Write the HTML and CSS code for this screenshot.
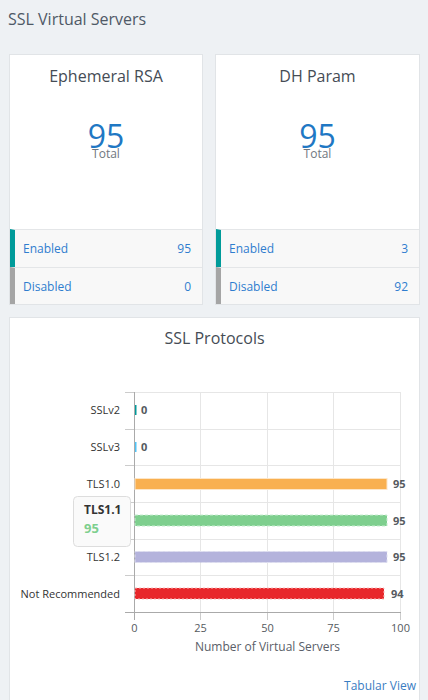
FILE: index.html
```html
<!DOCTYPE html>
<html>
<head>
<meta charset="utf-8">
<link rel="stylesheet" href="styles.css">
</head>
<body>
<div class="page">
  <h1 class="page-title">SSL Virtual Servers</h1>
  <div class="cards">
    <div class="card stat-card">
      <div class="card-title">Ephemeral RSA</div>
      <div class="total">
        <div class="total-num">95</div>
        <div class="total-label">Total</div>
      </div>
      <div class="rows">
        <div class="row row-enabled"><span>Enabled</span><span>95</span></div>
        <div class="row row-disabled"><span>Disabled</span><span>0</span></div>
      </div>
    </div>
    <div class="card stat-card">
      <div class="card-title">DH Param</div>
      <div class="total">
        <div class="total-num">95</div>
        <div class="total-label">Total</div>
      </div>
      <div class="rows">
        <div class="row row-enabled"><span>Enabled</span><span>3</span></div>
        <div class="row row-disabled"><span>Disabled</span><span>92</span></div>
      </div>
    </div>
  </div>
  <div class="card chart-card">
    <div class="card-title">SSL Protocols</div>
    <svg class="chart" width="409" height="310" viewBox="0 0 409 310">
      <g class="grid" stroke="#e6e6e6" stroke-width="1">
        <line x1="190.5" y1="42" x2="190.5" y2="262"/>
        <line x1="257.5" y1="42" x2="257.5" y2="262"/>
        <line x1="323.5" y1="42" x2="323.5" y2="262"/>
        <line x1="390.5" y1="42" x2="390.5" y2="262"/>
        <line x1="124" y1="42.5" x2="390" y2="42.5"/>
        <line x1="124" y1="79.5" x2="390" y2="79.5"/>
        <line x1="124" y1="115.5" x2="390" y2="115.5"/>
        <line x1="124" y1="152.5" x2="390" y2="152.5"/>
        <line x1="124" y1="189.5" x2="390" y2="189.5"/>
        <line x1="124" y1="225.5" x2="390" y2="225.5"/>
      </g>
      <g stroke="#cccccc" stroke-width="1">
        <line x1="115" y1="42.5" x2="124" y2="42.5"/>
        <line x1="115" y1="79.5" x2="124" y2="79.5"/>
        <line x1="115" y1="115.5" x2="124" y2="115.5"/>
        <line x1="115" y1="152.5" x2="124" y2="152.5"/>
        <line x1="115" y1="189.5" x2="124" y2="189.5"/>
        <line x1="115" y1="225.5" x2="124" y2="225.5"/>
      </g>
      <g stroke="#cccccc" stroke-width="1">
        <line x1="190.5" y1="262" x2="190.5" y2="270"/>
        <line x1="257.5" y1="262" x2="257.5" y2="270"/>
        <line x1="323.5" y1="262" x2="323.5" y2="270"/>
        <line x1="390.5" y1="262" x2="390.5" y2="270"/>
      </g>
      <line x1="115" y1="262.5" x2="391" y2="262.5" stroke="#aaaaaa" stroke-width="1"/>
      <line x1="124.5" y1="42" x2="124.5" y2="270" stroke="#aaaaaa" stroke-width="1"/>

      <g class="bars">
        <rect x="125" y="55" width="1.5" height="10" fill="#00999a"/>
        <rect x="125" y="92" width="1.5" height="10" fill="#4fc3f7"/>
        <rect x="125" y="128.5" width="252" height="11" fill="#f9b050" stroke="#fde6c8" stroke-width="1"/>
        <rect x="125" y="165" width="252" height="11" fill="#7ecf8e" stroke="#c7ecd0" stroke-width="1" stroke-dasharray="3 2"/>
        <rect x="125" y="201.5" width="252" height="11" fill="#b4b3dc" stroke="#dedef0" stroke-width="1" stroke-dasharray="3 2"/>
        <rect x="125" y="238" width="249" height="11" fill="#e8272b" stroke="#f8bcbc" stroke-width="1" stroke-dasharray="2 2"/>
      </g>

      <g class="vals">
        <text x="131" y="64">0</text>
        <text x="131" y="101">0</text>
        <text x="383" y="138">95</text>
        <text x="383" y="174.5">95</text>
        <text x="383" y="211">95</text>
        <text x="381" y="248">94</text>
      </g>

      <g class="ylabels" text-anchor="end">
        <text x="110" y="64">SSLv2</text>
        <text x="110" y="101">SSLv3</text>
        <text x="110" y="138">TLS1.0</text>
        <text x="110" y="211">TLS1.2</text>
        <text x="110" y="248">Not Recommended</text>
      </g>

      <g class="xlabels" text-anchor="middle">
        <text x="124.5" y="282">0</text>
        <text x="190.5" y="282">25</text>
        <text x="257.5" y="282">50</text>
        <text x="323.5" y="282">75</text>
        <text x="390.5" y="282">100</text>
      </g>
      <text class="axis-title" x="257.5" y="301" text-anchor="middle">Number of Virtual Servers</text>

      <g class="tooltip">
        <rect x="63.5" y="146.5" width="57" height="50" rx="4" ry="4" fill="#fafafa" stroke="#dddddd" stroke-width="1"/>
        <text class="tt-name" x="74" y="164">TLS1.1</text>
        <text class="tt-val" x="74" y="183">95</text>
      </g>
    </svg>
    <div class="chart-footer"><a class="tabular-link">Tabular View</a></div>
  </div>
</div>
</body>
</html>
```

FILE: styles.css
```css
* {
  box-sizing: border-box;
}

html, body {
  margin: 0;
  padding: 0;
  background: #eef1f4;
  font-family: "Open Sans", "DejaVu Sans", sans-serif;
}

.page {
  padding: 0 8px 0 9px;
}

.page-title {
  margin: 0;
  padding: 7px 0 0 0;
  height: 54px;
  font-size: 16px;
  font-weight: 400;
  line-height: 24px;
  color: #4f5966;
  margin-left: -1px;
}

.cards {
  display: grid;
  grid-template-columns: 194px 205px;
  column-gap: 12px;
}

.card {
  background: #ffffff;
  border: 1px solid #e1e4e7;
}

.stat-card {
  height: 251px;
  display: flex;
  flex-direction: column;
}

.card-title {
  text-align: center;
  font-size: 16px;
  line-height: 22px;
  color: #454c55;
  padding-top: 10px;
}

.total {
  flex: 1;
  display: flex;
  flex-direction: column;
  align-items: center;
  padding-top: 33px;
}

.total-num {
  font-size: 32px;
  line-height: 32px;
  color: #1f78c4;
  font-weight: 400;
}

.total-label {
  font-size: 12px;
  line-height: 14px;
  color: #707780;
  margin-top: -5px;
}

.rows {
  display: flex;
  flex-direction: column;
}

.row {
  display: flex;
  justify-content: space-between;
  align-items: center;
  height: 38px;
  background: #f8f8f8;
  border-top: 1px solid #e4e6e8;
  padding: 0 11px 0 8px;
  font-size: 12px;
  color: #2f7dcf;
}

.row-enabled {
  border-left: 5px solid #009b9a;
}

.row-disabled {
  border-left: 5px solid #a5a5a5;
  height: 37px;
}

.chart-card {
  margin-top: 12px;
  height: 400px;
  display: flex;
  flex-direction: column;
}

.chart-card .card-title {
  padding-top: 9px;
}

.chart {
  display: block;
  margin-top: 1px;
  font-family: "Open Sans", "DejaVu Sans", sans-serif;
}

.chart .ylabels text {
  font-size: 11px;
  fill: #333333;
}

.chart .vals text {
  font-size: 11px;
  font-weight: 700;
  fill: #555a60;
}

.chart .xlabels text {
  font-size: 11px;
  fill: #555a60;
}

.chart .axis-title {
  font-size: 12px;
  fill: #5a6068;
}

.chart .tt-name {
  font-size: 12px;
  font-weight: 700;
  fill: #333333;
}

.chart .tt-val {
  font-size: 13px;
  font-weight: 700;
  fill: #7ecf8e;
}

.chart-footer {
  display: flex;
  justify-content: flex-end;
  padding: 17px 3px 0 0;
}

.tabular-link {
  font-size: 12px;
  color: #3a7dc2;
  text-decoration: none;
}
```
